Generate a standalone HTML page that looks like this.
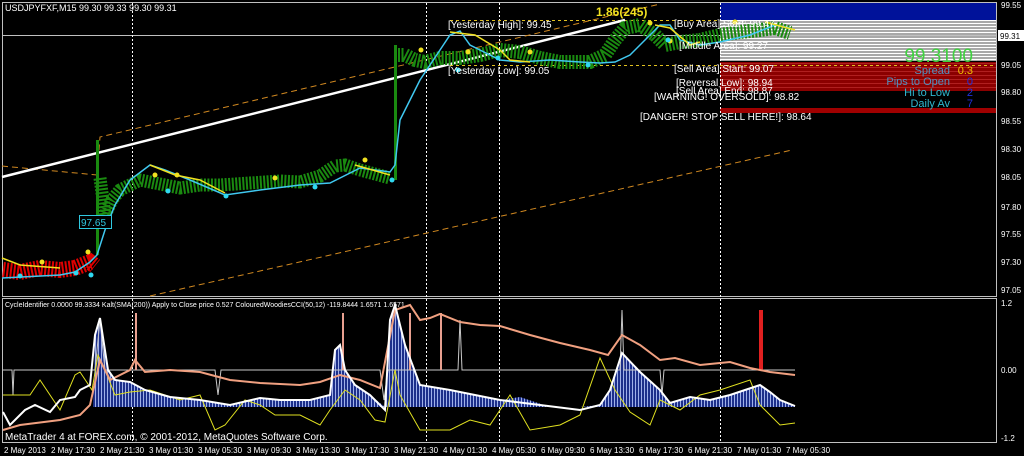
<!DOCTYPE html>
<html><head><meta charset="utf-8"><style>
html,body{margin:0;padding:0;background:#000;}
svg{display:block;font-family:"Liberation Sans",sans-serif;}
</style></head><body>
<svg width="1024" height="456" viewBox="0 0 1024 456" xmlns="http://www.w3.org/2000/svg">
<defs>
<pattern id="gs" width="4" height="3" patternUnits="userSpaceOnUse"><rect width="4" height="3" fill="#a8a8a8"/><rect y="2" width="4" height="1" fill="#fff"/></pattern>
<pattern id="rs" width="4" height="4" patternUnits="userSpaceOnUse"><rect width="4" height="4" fill="#8b0000"/><rect y="3" width="4" height="1" fill="#b02020"/></pattern>
<pattern id="hs" width="3" height="4" patternUnits="userSpaceOnUse"><rect width="3" height="4" fill="#1c2f8a"/><rect x="2" width="1" height="4" fill="#9fb0e8"/></pattern>
</defs>
<rect width="1024" height="456" fill="#000"/>
<rect x="720" y="3" width="277" height="17" fill="#00129a"/>
<rect x="720" y="20" width="277" height="41" fill="url(#gs)"/>
<rect x="720" y="62" width="277" height="29" fill="url(#rs)"/>
<rect x="720" y="108" width="277" height="5" fill="#a00000"/>
<rect x="2.5" y="2.5" width="994" height="294" fill="none" stroke="#c0c0c0" stroke-width="1"/>
<rect x="2.5" y="298.5" width="994" height="144" fill="none" stroke="#c0c0c0" stroke-width="1"/>
<line x1="3" y1="35.5" x2="996" y2="35.5" stroke="#c0c0c0"/>
<g stroke="#fff" stroke-dasharray="2,2" stroke-width="1">
<line x1="132.5" y1="3" x2="132.5" y2="442"/><line x1="426.5" y1="3" x2="426.5" y2="442"/>
<line x1="499.5" y1="3" x2="499.5" y2="442"/><line x1="720.5" y1="3" x2="720.5" y2="442"/>
</g>
<g stroke="#e0c020" stroke-dasharray="3,3"><line x1="450" y1="20.5" x2="720" y2="20.5"/><line x1="450" y1="65.5" x2="996" y2="65.5"/></g>
<g stroke="#d08820" stroke-dasharray="6,4" fill="none">
<polyline points="2,166 97,175 100,137 660,4"/>
<line x1="150" y1="296" x2="792" y2="150"/>
</g>
<line x1="2" y1="177" x2="625" y2="20" stroke="#fff" stroke-width="2.5"/>
<polyline points="3,270 20,272 40,268 60,270 75,268 90,262 95,266" fill="none" stroke="#e00000" stroke-width="16" stroke-dasharray="2,1.5"/>
<polyline points="100,178 105,215 112,200 120,190 130,185 140,180 160,184 180,188 200,185 220,185 250,183 280,181 300,182 320,176 335,166 345,165 360,170 375,174 390,178" fill="none" stroke="#1a8a10" stroke-width="13" stroke-dasharray="2,1.5"/>
<polyline points="398,55 405,55 415,60 425,62 440,58 460,58 480,55 500,50 520,52 540,58 560,62 590,62 605,55 615,40 625,28 640,25 655,35 665,45 680,42 700,40 720,35 740,32 760,30 775,28 790,33" fill="none" stroke="#1a8a10" stroke-width="14" stroke-dasharray="2,1.5"/>
<rect x="96" y="140" width="3" height="115" fill="#1a8a10"/>
<rect x="394" y="45" width="3" height="135" fill="#1a8a10"/>
<polyline points="2,278 60,275 75,272 90,262 97,255 105,230 115,205 130,180 150,165 165,170 190,180 225,195 260,190 300,185 330,183 360,168 390,172 395,165 400,120 420,80 440,50 450,35 460,31 470,45 500,60 520,62 550,60 580,62 600,63 615,62 630,55 640,45 650,35 660,25 670,25 680,40 700,45 720,42 750,35 775,25 790,28" fill="none" stroke="#40c8f0" stroke-width="1.5"/>
<g fill="none" stroke="#f0e020" stroke-width="1.5">
<polyline points="2,258 20,265 60,268"/><polyline points="150,165 175,175 200,180 225,193"/>
<polyline points="355,165 390,175"/><polyline points="450,32 475,35 500,50 510,60 530,62"/>
<polyline points="655,25 670,28 690,45 700,42"/><polyline points="765,22 795,30"/>
</g>
<g fill="#f0e020"><circle cx="42" cy="262" r="2.5"/><circle cx="88" cy="252" r="2.5"/><circle cx="155" cy="175" r="2.5"/><circle cx="177" cy="175" r="2.5"/><circle cx="275" cy="178" r="2.5"/><circle cx="365" cy="160" r="2.5"/><circle cx="421" cy="50" r="2.5"/><circle cx="468" cy="52" r="2.5"/><circle cx="530" cy="52" r="2.5"/><circle cx="650" cy="23" r="2.5"/><circle cx="670" cy="41" r="2.5"/><circle cx="735" cy="22" r="2.5"/></g>
<g fill="#30d8f0"><circle cx="20" cy="276" r="2.5"/><circle cx="76" cy="273" r="2.5"/><circle cx="91" cy="275" r="2.5"/><circle cx="168" cy="191" r="2.5"/><circle cx="226" cy="196" r="2.5"/><circle cx="315" cy="187" r="2.5"/><circle cx="392" cy="180" r="2.5"/><circle cx="458" cy="70" r="2.5"/><circle cx="498" cy="58" r="2.5"/><circle cx="588" cy="65" r="2.5"/><circle cx="668" cy="40" r="2.5"/></g>
<rect x="79.5" y="215.5" width="32" height="13" fill="#000" stroke="#30c8e0"/>
<text x="81" y="226" font-size="10" fill="#30c8e0">97.65</text>
<g font-size="10" fill="#fff">
<text x="5" y="11" font-size="9">USDJPYFXF,M15  99.30 99.33 99.30 99.31</text>
<text x="448" y="28">[Yesterday High]: 99.45</text>
<text x="448" y="74">[Yesterday Low]: 99.05</text>
<text x="674" y="27">[Buy Area] Start: 99.47</text>
<text x="679" y="49">[Middle Area]: 99.27</text>
<text x="674" y="72">[Sell Area] Start: 99.07</text>
<text x="676" y="86">[Reversal Low]: 98.94</text>
<text x="676" y="94">[Sell Area] End: 98.87</text>
<text x="654" y="100">[WARNING! OVERSOLD]: 98.82</text>
<text x="640" y="120">[DANGER! STOP SELL HERE!]: 98.64</text>
</g>
<text x="596" y="16" font-size="12" font-weight="bold" fill="#f0e020">1.86(245)</text>
<text x="973" y="62" font-size="19" fill="#40d040" text-anchor="end">99.3100</text>
<g font-size="11" text-anchor="end">
<text x="950" y="74" fill="#5090c0">Spread</text><text x="973" y="74" fill="#f0c000">0.3</text>
<text x="950" y="85" fill="#5090c0">Pips to Open</text><text x="973" y="85" fill="#2030e0">0</text>
<text x="950" y="96" fill="#30b8d0">Hi to Low</text><text x="973" y="96" fill="#2030e0">2</text>
<text x="950" y="107" fill="#30b8d0">Daily Av</text><text x="973" y="107" fill="#2030e0">7</text>
</g>
<g font-size="8" fill="#fff">
<text x="1001" y="8">99.55</text>
<text x="1001" y="68">99.05</text><text x="1001" y="95">98.80</text><text x="1001" y="124">98.55</text>
<text x="1001" y="152">98.30</text><text x="1001" y="180">98.05</text><text x="1001" y="210">97.80</text>
<text x="1001" y="237">97.55</text><text x="1001" y="265">97.30</text><text x="1001" y="293">97.05</text>
<text x="1001" y="306">1.2</text><text x="1001" y="373">0.00</text><text x="1001" y="441">-1.2</text>
</g>
<rect x="998" y="30" width="26" height="11" fill="#fff"/>
<text x="1000" y="39" font-size="8" fill="#000">99.31</text>
<text x="5" y="307" font-size="7" fill="#fff">CycleIdentifier 0.0000 99.3334  Kalt(SMA(200)) Apply to Close price 0.527  ColouredWoodiesCCI(50,12) -119.8444 1.6571 1.6571</text>
<polygon fill="url(#hs)" points="93,407 95,335 100,318 108,370 115,380 130,382 145,390 170,397 200,400 230,405 260,398 280,400 310,400 330,395 335,350 340,345 345,370 355,385 370,395 385,407 390,320 395,305 405,345 420,385 450,390 500,400 520,397 550,407 580,407 600,405 610,390 622,353 640,372 660,390 670,403 690,397 710,400 730,395 745,390 760,385 770,392 780,400 795,406 795,407"/>
<polyline points="3,370 12,370 13,395 14,370 95,370 100,320 105,370 215,370 218,395 221,370 380,370 384,400 388,370 458,370 460,320 462,370 620,370 622,310 624,370 660,370 662,395 664,370 795,370" fill="none" stroke="#c8c8c8" stroke-width="1"/>
<line x1="136" y1="313" x2="136" y2="370" stroke="#e8a090" stroke-width="2"/>
<line x1="343" y1="313" x2="343" y2="370" stroke="#e8a090" stroke-width="2"/>
<line x1="410" y1="313" x2="410" y2="370" stroke="#e8a090" stroke-width="2"/>
<line x1="441" y1="313" x2="441" y2="370" stroke="#e8a090" stroke-width="2"/>
<rect x="759" y="310" width="4" height="60" fill="#e02020"/>
<polyline points="3,395 30,395 40,380 60,410 75,375 80,372 92,390 98,355 105,370 115,395 130,392 150,390 180,400 200,395 215,430 225,425 245,400 260,405 275,415 300,415 320,425 330,410 345,390 360,400 375,420 385,422 395,370 400,395 420,430 450,430 470,420 490,425 510,395 530,430 560,425 580,415 600,358 615,390 630,412 650,425 660,400 680,410 700,395 720,390 750,380 760,405 780,425 795,423" fill="none" stroke="#e0e020" stroke-width="1"/>
<polyline points="3,430 20,425 60,420 80,415 90,405 100,360 110,380 130,370 135,360 145,372 170,370 200,372 230,380 260,383 300,385 320,382 340,375 360,380 380,388 395,310 410,305 420,320 430,318 440,314 460,322 480,325 500,326 530,335 560,343 590,350 608,355 622,335 640,345 660,360 675,358 700,365 730,362 750,368 770,372 795,375" fill="none" stroke="#f0a080" stroke-width="2"/>
<polyline points="3,412 10,425 25,410 35,405 50,412 60,400 75,397 80,390 90,385 95,335 100,318 108,370 115,380 130,382 145,390 170,397 200,400 230,405 260,398 280,400 310,400 330,395 335,350 340,345 345,370 355,385 370,395 385,410 390,320 395,305 405,345 420,385 450,390 500,400 540,405 580,410 600,405 610,390 622,353 640,372 660,390 670,403 690,397 710,400 730,395 745,390 760,385 770,392 780,400 795,406" fill="none" stroke="#fff" stroke-width="2"/>
<text x="5" y="440" font-size="10" fill="#fff">MetaTrader 4 at FOREX.com, © 2001-2012, MetaQuotes Software Corp.</text>
<g font-size="8" fill="#fff">
<text x="4" y="453">2 May 2013</text><text x="51" y="453">2 May 17:30</text><text x="100" y="453">2 May 21:30</text>
<text x="149" y="453">3 May 01:30</text><text x="198" y="453">3 May 05:30</text><text x="247" y="453">3 May 09:30</text>
<text x="296" y="453">3 May 13:30</text><text x="345" y="453">3 May 17:30</text><text x="394" y="453">3 May 21:30</text>
<text x="443" y="453">4 May 01:30</text><text x="492" y="453">4 May 05:30</text><text x="541" y="453">6 May 09:30</text>
<text x="590" y="453">6 May 13:30</text><text x="639" y="453">6 May 17:30</text><text x="688" y="453">6 May 21:30</text>
<text x="737" y="453">7 May 01:30</text><text x="786" y="453">7 May 05:30</text>
</g>
</svg>
</body></html>
